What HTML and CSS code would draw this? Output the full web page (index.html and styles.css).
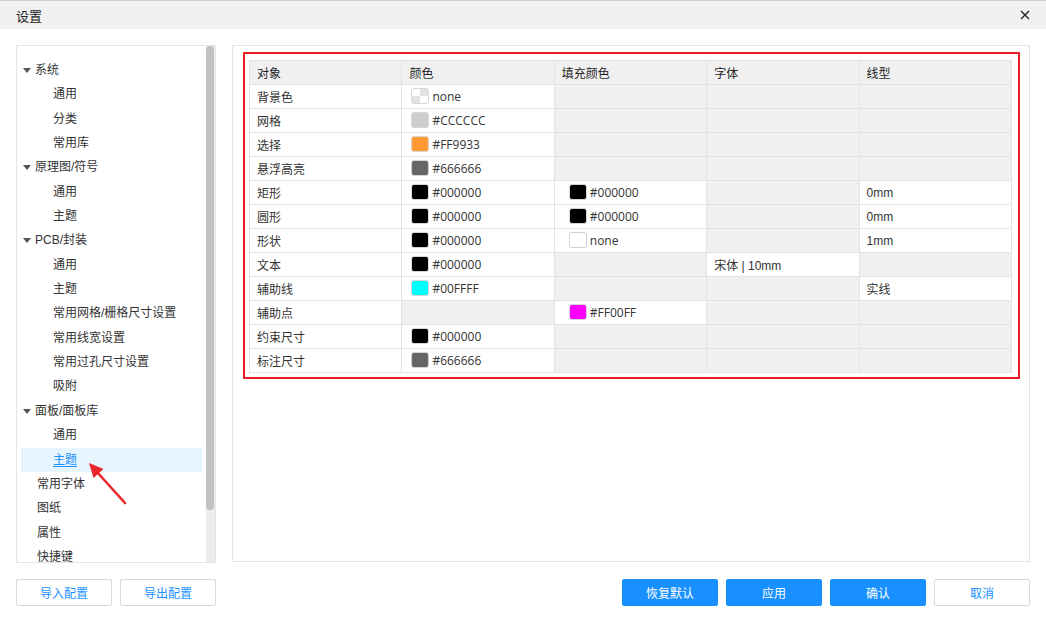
FILE: index.html
```html
<!DOCTYPE html>
<html lang="zh">
<head>
<meta charset="utf-8">
<title>设置</title>
<link rel="stylesheet" href="styles.css">
</head>
<body>
<div class="dialog">
  <div class="titlebar">
    <span class="title">设置</span>
    <svg class="close" width="10" height="10" viewBox="0 0 10 10"><path d="M1 1L9 9M9 1L1 9" stroke="#222" stroke-width="1.4" fill="none"/></svg>
  </div>
  <div class="main">
    <div class="sidebar">
      <ul class="tree">
        <li class="node parent"><i class="caret"></i>系统</li>
        <li class="node child">通用</li>
        <li class="node child">分类</li>
        <li class="node child">常用库</li>
        <li class="node parent"><i class="caret"></i>原理图/符号</li>
        <li class="node child">通用</li>
        <li class="node child">主题</li>
        <li class="node parent"><i class="caret"></i>PCB/封装</li>
        <li class="node child">通用</li>
        <li class="node child">主题</li>
        <li class="node child">常用网格/栅格尺寸设置</li>
        <li class="node child">常用线宽设置</li>
        <li class="node child">常用过孔尺寸设置</li>
        <li class="node child">吸附</li>
        <li class="node parent"><i class="caret"></i>面板/面板库</li>
        <li class="node child">通用</li>
        <li class="node child active"><span class="link">主题</span></li>
        <li class="node leaf">常用字体</li>
        <li class="node leaf">图纸</li>
        <li class="node leaf">属性</li>
        <li class="node leaf">快捷键</li>
      </ul>
      <div class="scrollbar"><div class="thumb"></div></div>
    </div>
    <div class="content">
      <div class="highlight">
        <table class="theme">
          <thead>
            <tr><th>对象</th><th>颜色</th><th>填充颜色</th><th>字体</th><th>线型</th></tr>
          </thead>
          <tbody>
            <tr><td>背景色</td><td class="c"><span class="sw none"></span><span class="hex">none</span></td><td class="off"></td><td class="off"></td><td class="off"></td></tr>
            <tr><td>网格</td><td class="c"><span class="sw" style="background:#CCCCCC"></span><span class="hex">#CCCCCC</span></td><td class="off"></td><td class="off"></td><td class="off"></td></tr>
            <tr><td>选择</td><td class="c"><span class="sw" style="background:#FF9933"></span><span class="hex">#FF9933</span></td><td class="off"></td><td class="off"></td><td class="off"></td></tr>
            <tr><td>悬浮高亮</td><td class="c"><span class="sw" style="background:#666666"></span><span class="hex">#666666</span></td><td class="off"></td><td class="off"></td><td class="off"></td></tr>
            <tr><td>矩形</td><td class="c"><span class="sw" style="background:#000000"></span><span class="hex">#000000</span></td><td class="c f"><span class="sw" style="background:#000000"></span><span class="hex">#000000</span></td><td class="off"></td><td class="l">0mm</td></tr>
            <tr><td>圆形</td><td class="c"><span class="sw" style="background:#000000"></span><span class="hex">#000000</span></td><td class="c f"><span class="sw" style="background:#000000"></span><span class="hex">#000000</span></td><td class="off"></td><td class="l">0mm</td></tr>
            <tr><td>形状</td><td class="c"><span class="sw" style="background:#000000"></span><span class="hex">#000000</span></td><td class="c f"><span class="sw empty"></span><span class="hex">none</span></td><td class="off"></td><td class="l">1mm</td></tr>
            <tr><td>文本</td><td class="c"><span class="sw" style="background:#000000"></span><span class="hex">#000000</span></td><td class="off"></td><td class="l">宋体 | 10mm</td><td class="off"></td></tr>
            <tr><td>辅助线</td><td class="c"><span class="sw" style="background:#00FFFF"></span><span class="hex">#00FFFF</span></td><td class="off"></td><td class="off"></td><td class="l">实线</td></tr>
            <tr><td>辅助点</td><td class="off"></td><td class="c f"><span class="sw" style="background:#FF00FF"></span><span class="hex">#FF00FF</span></td><td class="off"></td><td class="off"></td></tr>
            <tr><td>约束尺寸</td><td class="c"><span class="sw" style="background:#000000"></span><span class="hex">#000000</span></td><td class="off"></td><td class="off"></td><td class="off"></td></tr>
            <tr><td>标注尺寸</td><td class="c"><span class="sw" style="background:#666666"></span><span class="hex">#666666</span></td><td class="off"></td><td class="off"></td><td class="off"></td></tr>
          </tbody>
        </table>
      </div>
    </div>
  </div>
  <div class="footer">
    <div class="group">
      <button class="btn ghost">导入配置</button>
      <button class="btn ghost">导出配置</button>
    </div>
    <div class="group">
      <button class="btn primary">恢复默认</button>
      <button class="btn primary">应用</button>
      <button class="btn primary">确认</button>
      <button class="btn ghost">取消</button>
    </div>
  </div>
  <svg class="arrow" width="1046" height="623" viewBox="0 0 1046 623">
    <path d="M125 503 L97 472" stroke="#e8262b" stroke-width="2.6" stroke-linecap="round" fill="none"/>
    <polygon points="89,463 103.5,469 93.5,478" fill="#e8262b"/>
  </svg>
</div>
</body>
</html>
```

FILE: styles.css
```css
* { box-sizing: border-box; }
html, body { margin: 0; padding: 0; background: #fff; }
body {
  width: 1046px;
  height: 623px;
  overflow: hidden;
  font-family: "Liberation Sans", "Noto Sans CJK SC", sans-serif;
  font-size: 12px;
  color: #333;
}
.dialog { position: relative; width: 1046px; height: 623px; }

.titlebar {
  height: 29px;
  background: #f0f0f0;
  border-top: 1px solid #cfcfcf;
  display: flex;
  align-items: center;
  justify-content: space-between;
  padding: 0 16px 0 16px;
}
.title { font-size: 13px; color: #222; }

.main {
  display: flex;
  gap: 16px;
  padding: 16px 16px 0 16px;
}

.sidebar {
  width: 200px;
  height: 518px;
  border: 1px solid #e4e4e4;
  display: flex;
  overflow: hidden;
}
.tree {
  list-style: none;
  margin: 0;
  padding: 12px 4px 0 4px;
  flex: 1;
  overflow: hidden;
}
.node {
  height: 24.35px;
  line-height: 24.35px;
  white-space: nowrap;
  position: relative;
  color: #333;
}
.node.parent { padding-left: 14px; }
.node.child { padding-left: 32px; }
.node.leaf { padding-left: 16px; }
.caret {
  position: absolute;
  left: 2px;
  top: 10px;
  width: 0;
  height: 0;
  border-left: 4px solid transparent;
  border-right: 4px solid transparent;
  border-top: 5px solid #555;
}
.node.active { background: #e6f4fe; }
.link { color: #1890ff; text-decoration: underline; text-underline-offset: 2px; }

.scrollbar {
  width: 9px;
  background: #ececec;
  position: relative;
  flex: none;
}
.thumb {
  width: 8px;
  height: 464px;
  background: #c1c1c1;
  border-radius: 4px;
}

.content {
  width: 798px;
  height: 517px;
  border: 1px solid #e4e4e4;
  padding: 6px 0 0 10px;
}
.highlight {
  width: 777px;
  border: 2px solid #e81c24;
  padding: 6px 6px 4px 4px;
}

.theme {
  width: 763px;
  border-collapse: collapse;
  table-layout: fixed;
  border: 1px solid #e0e0e0;
}
.theme th, .theme td {
  height: 24px;
  padding: 0 0 0 7px;
  border: 1px solid #e3e3e3;
  text-align: left;
  font-weight: normal;
  white-space: nowrap;
  background: #fff;
  color: #333;
}
.theme th { background: #f0f0f0; color: #1e1e1e; }
.theme td.off { background: #f0f0f0; }
.theme td.c { padding-left: 9px; }
.theme td.c.f { padding-left: 14px; }
.theme td.l { padding-left: 7px; }

.sw {
  display: inline-block;
  width: 18px;
  height: 16px;
  border-radius: 3px;
  border: 1px solid #d6d6d6;
  vertical-align: middle;
  margin-right: 3px;
  position: relative;
  top: -1px;
}
.sw.none {
  background: conic-gradient(#e2e2e2 0 25%, #fff 0 50%, #e2e2e2 0 75%, #fff 0);
}
.sw.empty { background: #fff; border-color: #cfcfcf; }
.hex {
  font-family: "Open Sans", "Liberation Sans", sans-serif;
  font-size: 12px;
  vertical-align: middle;
  color: #333;
}

.footer {
  display: flex;
  justify-content: space-between;
  padding: 16px 16px 0 16px;
}
.group { display: flex; gap: 8px; }
.btn {
  width: 96px;
  height: 27px;
  border-radius: 2px;
  font-family: "Liberation Sans", "Noto Sans CJK SC", sans-serif;
  font-size: 12px;
  padding: 0;
  cursor: pointer;
}
.btn.ghost { background: #fff; border: 1px solid #d9d9d9; color: #1890ff; }
.btn.primary { background: #1890ff; border: 1px solid #1890ff; color: #fff; }

.arrow { position: absolute; left: 0; top: 0; pointer-events: none; }
```
